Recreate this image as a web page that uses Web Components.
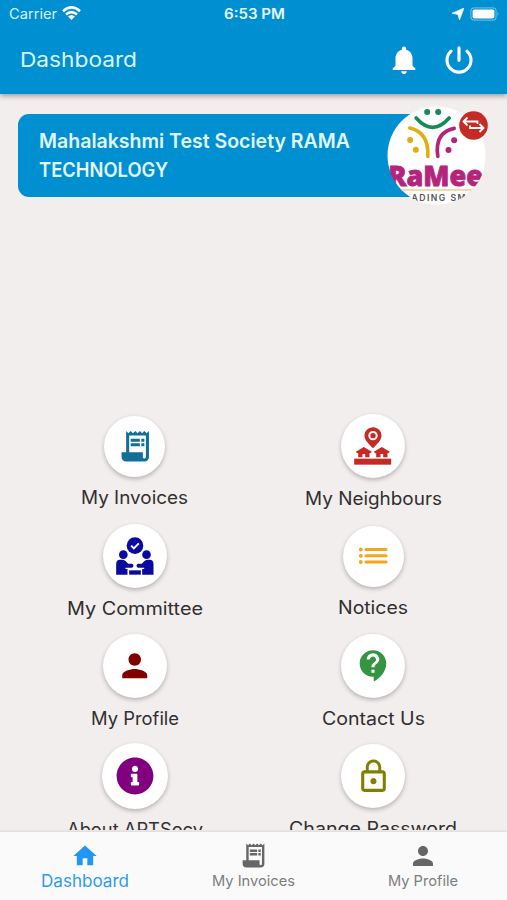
<!DOCTYPE html>
<html lang="en">
<head>
<meta charset="utf-8">
<title>Dashboard</title>
<style>
html,body{margin:0;height:100%}
body{width:507px;height:900px;overflow:hidden;background:#f2eeee;font-family:Inter,"Open Sans",sans-serif}
</style>
</head>
<body>
<society-app></society-app>
<script>
const P = {
  receipt: '<path d="M19.5 3.5L18 2l-1.5 1.5L15 2l-1.5 1.5L12 2l-1.5 1.5L9 2 7.5 3.5 6 2v14H3v3c0 1.66 1.34 3 3 3h12c1.66 0 3-1.34 3-3V2l-1.5 1.5zM19 19c0 .55-.45 1-1 1s-1-.45-1-1v-3H8V5h11v14zM9 7h6v2H9zM16 7h2v2h-2zM9 10h6v2H9zM16 10h2v2h-2z"/>',
  person: '<path d="M12 12c2.21 0 4-1.79 4-4s-1.79-4-4-4-4 1.79-4 4 1.79 4 4 4zm0 2c-2.67 0-8 1.34-8 4v2h16v-2c0-2.66-5.33-4-8-4z"/>',
  home: '<path d="M10 20v-6h4v6h5v-8h3L12 3 2 12h3v8z"/>',
  bell: '<path d="M12 22c1.1 0 2-.9 2-2h-4c0 1.1.89 2 2 2zm6-6v-5c0-3.07-1.64-5.64-4.5-6.32V4c0-.83-.67-1.5-1.5-1.5s-1.5.67-1.5 1.5v.68C7.63 5.36 6 7.92 6 11v5l-2 2v1h16v-1l-2-2z"/>',
  power: '<path d="M12 3.9V12.2M6.7 6.1A8 8 0 1 0 17.3 6.1" fill="none" stroke="currentColor" stroke-width="2.1" stroke-linecap="round"/>',
  contact: '<path d="M11.5 2C6.81 2 3 5.81 3 10.5S6.81 19 11.5 19h.5v3c4.86-2.34 8-7 8-11.5C20 5.81 16.19 2 11.5 2zm1 14.5h-2v-2h2v2zm0-3.500h-2c0-3.250 3-3 3-5 0-1.100-.9-2-2-2s-2 .9-2 2h-2c0-2.210 1.790-4 4-4s4 1.790 4 4c0 2.500-3 2.750-3 5z"/>',
  lock: '<path d="M12 17c1.100 0 2-.9 2-2s-.9-2-2-2-2 .9-2 2 .9 2 2 2zm6-9h-1V6c0-2.760-2.240-5-5-5S7 3.240 7 6v2H6c-1.100 0-2 .9-2 2v10c0 1.100.9 2 2 2h12c1.100 0 2-.9 2-2V10c0-1.100-.9-2-2-2zM8.900 6c0-1.710 1.390-3.100 3.100-3.100s3.100 1.390 3.100 3.100v2H8.900V6zM18 20H6V10h12v10z"/>'
};
const ICONS = {
  receipt: ['0 0 24 24', P.receipt], person: ['0 0 24 24', P.person], home: ['0 0 24 24', P.home],
  bell: ['0 0 24 24', P.bell], power: ['0 0 24 24', P.power], contact: ['0 0 24 24', P.contact], lock: ['0 0 24 24', P.lock],
  info: ['0 0 512 512', '<path d="M256 8C119.043 8 8 119.083 8 256c0 136.997 111.043 248 248 248s248-111.003 248-248C504 119.083 392.957 8 256 8zm0 110c23.196 0 42 18.804 42 42s-18.804 42-42 42-42-18.804-42-42 18.804-42 42-42zm56 254c0 6.627-5.373 12-12 12h-88c-6.627 0-12-5.373-12-12v-24c0-6.627 5.373-12 12-12h12v-64h-12c-6.627 0-12-5.373-12-12v-24c0-6.627 5.373-12 12-12h64c6.627 0 12 5.373 12 12v100h12c6.627 0 12 5.373 12 12v24z"/>'],
  list: ['153 28.5 192 192', '<path d="M228 105H288M228 124H288M228 142.500H288" stroke="currentColor" stroke-width="9" stroke-linecap="round"/><circle cx="212.500" cy="105" r="5.800"/><circle cx="212.500" cy="124" r="5.800"/><circle cx="212.500" cy="142.500" r="5.800"/>'],
  neighbours: ['153.5 28 192 192', '<path fill-rule="evenodd" d="M249.500 68C235 68 224 79 224 93C224 108 240 119 249.500 131C259 119 275 108 275 93C275 79 264 68 249.500 68ZM249.500 79a14 14 0 1 1 0 28a14 14 0 1 1 0-28Z"/><circle cx="249.500" cy="93" r="8"/><path d="M222 127L246 141L242 146L239 145V158H226V148H218V158H205V145L202 146L198 141Z"/><path d="M276 127L300 141L296 146L293 145V158H280V148H272V158H259V145L256 146L252 141Z"/><rect x="193" y="162" width="111" height="18"/>'],
  committee: ['128.5 28 192 192', '<circle cx="224.500" cy="93" r="25"/><path d="M213 93L221 101L236 86" fill="none" stroke="#fff" stroke-width="6"/><circle cx="189.500" cy="120" r="13"/><circle cx="259" cy="120" r="13"/><path d="M168 180V148Q168 135 180 135H187Q193 135 197 140L204 147H214Q220 147 220 153Q220 159 214 159H196V163H202V180Z"/><path d="M280 180V148Q280 135 268 135H262Q256 135 252 140L245 147H235Q229 147 229 153Q229 159 235 159H252V163H246V180Z"/><rect x="207" y="167" width="35" height="13"/>']
};

class AppIcon extends HTMLElement {
  connectedCallback() {
    const [vb, body] = ICONS[this.getAttribute('name')];
    const s = this.getAttribute('size');
    this.attachShadow({mode: 'open'}).innerHTML =
      `<style>:host{display:block;flex:none;width:${s}px;height:${s}px}svg{display:block;width:100%;height:100%;fill:currentColor}</style><svg viewBox="${vb}">${body}</svg>`;
  }
}

/* A single line whose glyphs are widened or narrowed to span the width given in "span". */
class FitText extends HTMLElement {
  connectedCallback() {
    const span = Number(this.getAttribute('span'));
    this.attachShadow({mode: 'open'}).innerHTML =
      `<style>:host{display:block;white-space:nowrap;width:${span}px}span{display:inline-block;transform-origin:0 50%}</style><span></span>`;
    const el = this.shadowRoot.querySelector('span');
    el.textContent = this.getAttribute('text');
    el.style.transform = `scaleX(${span / el.getBoundingClientRect().width})`;
  }
}

class StatusBar extends HTMLElement {
  connectedCallback() {
    this.attachShadow({mode: 'open'}).innerHTML = `
<style>
:host{display:grid;grid-template-columns:1fr auto 1fr;align-items:center;height:27px;padding:0 7px 0 8.500px;box-sizing:border-box;color:#fff}
.l,.r{display:flex;align-items:center}.l{font-size:14px;color:#d8f2fd;gap:5px}.r{justify-content:flex-end;gap:6px}
.t{font-size:14px;font-weight:600;color:#e6f8ff}svg{display:block}
</style>
<div class="l"><fit-text text="Carrier" span="48"></fit-text>
<svg width="19" height="15" viewBox="0 0 19 15" fill="none" stroke="#fff" stroke-width="2.500"><path d="M1 5.200Q9.500-2.400 18 5.200M4 8.500Q9.500 3.800 15 8.500"/><path d="M6 10.600Q9.500 7.600 13 10.600L9.500 14Z" fill="#fff" stroke="none"/></svg></div>
<fit-text class="t" text="6:53 PM" span="61"></fit-text>
<div class="r"><svg width="12" height="12" viewBox="0 0 12 12"><path d="M12 0L7.500 12L6 6.500L0 5.200Z" fill="#fff" stroke="#fff" stroke-width=".6"/></svg>
<svg width="30" height="14" viewBox="0 0 30 14"><rect x=".9" y=".8" width="25.200" height="12.400" rx="3.500" fill="none" stroke="#5fb8e2" stroke-width="1.200"/><rect x="2.600" y="2.500" width="21.800" height="9" rx="1.800" fill="#fff"/><path d="M27.500 4.800Q29.600 7 27.500 9.200Z" fill="#5fb8e2"/></svg></div>`;
  }
}

class AppHeader extends HTMLElement {
  connectedCallback() {
    this.attachShadow({mode: 'open'}).innerHTML = `
<style>
:host{display:block;flex:none;height:94px;background:#008fd0;box-shadow:0 2px 5px rgba(70,50,50,.45);position:relative;z-index:2}
.bar{display:flex;align-items:center;height:65px;padding:0 30px 0 20px;color:#fff}
.title{flex:1;font-size:20.600px;color:#d9f5ff}
.acts{display:flex;align-items:center;gap:20px}
</style>
<status-bar></status-bar>
<div class="bar"><div class="title"><fit-text text="Dashboard" span="117"></fit-text></div>
<div class="acts"><app-icon name="bell" size="34"></app-icon><app-icon name="power" size="36"></app-icon></div></div>`;
  }
}

class SocietyCard extends HTMLElement {
  connectedCallback() {
    this.attachShadow({mode: 'open'}).innerHTML = `
<style>
:host{display:block;position:relative;margin:19.500px 0 0 18px;width:472px;height:83px}
.card{box-sizing:border-box;width:420px;height:83px;border-radius:11px;background:#008fd0;padding:13px 0 0 21px;color:#e0f8ff;font-weight:600;font-size:20px;line-height:29px}
.logo{position:absolute;left:368.500px;top:-8px;width:99px;height:99px}
.swap{position:absolute;left:441px;top:-3px;width:29px;height:29px}
</style>
<div class="card"><fit-text text="Mahalakshmi Test Society RAMA" span="311"></fit-text><fit-text text="TECHNOLOGY" span="129"></fit-text></div>
<svg class="logo" viewBox="50.500 32 297 297">
<defs><clipPath id="c"><circle cx="199" cy="180.500" r="148"/></clipPath></defs>
<circle cx="199" cy="180.500" r="147" fill="#fff"/>
<g clip-path="url(#c)">
<g fill="none" stroke-width="11" stroke-linecap="round"><path d="M138 68Q187 124 237 68" stroke="#168a58"/><path d="M119 98Q177 112 173 183" stroke="#dfae12"/><path d="M252 99Q192 112 203 183" stroke="#b5247b"/></g>
<g fill="#168a58"><circle cx="171" cy="50" r="9"/><circle cx="204" cy="50" r="9"/></g>
<g fill="#dfae12"><circle cx="120" cy="134" r="9"/><circle cx="137" cy="163" r="9"/></g>
<g fill="#b5247b"><circle cx="252" cy="135" r="9"/><circle cx="235" cy="164" r="9"/></g>
<text x="54" y="272" font-family="Open Sans,sans-serif" font-weight="800" font-size="85" textLength="284" lengthAdjust="spacingAndGlyphs" fill="#b5247b" stroke="#b5247b" stroke-width="2.500">RaMee</text>
<path d="M75 284H325" stroke="#f0d080" stroke-width="4"/>
<text x="124" y="317" font-family="Inter,sans-serif" font-weight="600" font-size="26" textLength="162" fill="#555">ADING SM</text>
</g></svg>
<svg class="swap" viewBox="0 0 29 29" fill="none" stroke="#fff" stroke-width="1.800"><circle cx="14.500" cy="14.500" r="14.300" fill="#c62a24" stroke="none"/><path d="M8.500 6.500L4.500 10.500L8.500 14.500M4.500 10.500H18.500V13M20.500 13L24.500 17L20.500 21M24.500 17H11V14.500"/></svg>`;
  }
}

class MenuTile extends HTMLElement {
  connectedCallback() {
    const a = n => this.getAttribute(n);
    this.attachShadow({mode: 'open'}).innerHTML = `
<style>
:host{display:flex;flex-direction:column;align-items:center;height:110px;color:#303030;font-size:18px;line-height:24px}
.slot{height:66px;display:flex;align-items:center}
.disc{width:${a('disc')}px;height:${a('disc')}px;border-radius:50%;background:#fff;box-shadow:0 2px 4px rgba(60,50,50,.32);display:flex;align-items:center;justify-content:center;color:${a('tint')}}
fit-text{margin-top:${a('drop')}px}
</style>
<div class="slot"><div class="disc"><app-icon name="${a('icon')}" size="${a('size')}"></app-icon></div></div>
<fit-text text="${a('label')}" span="${a('span')}"></fit-text>`;
  }
}

class NavItem extends HTMLElement {
  connectedCallback() {
    const a = n => this.getAttribute(n), on = this.hasAttribute('active');
    this.attachShadow({mode: 'open'}).innerHTML = `
<style>
:host{display:flex;flex-direction:column;align-items:center;flex:1;padding-top:9px;color:${on ? '#2196f3' : '#666'}}
.i{height:30px;display:flex;align-items:center}
fit-text{font-size:${on ? 17 : 14.5}px;line-height:20px;color:${on ? '#2b9af3' : '#7d7d7d'}}
</style>
<div class="i"><app-icon name="${a('icon')}" size="${a('size')}"></app-icon></div>
<fit-text text="${a('label')}" span="${a('span')}"></fit-text>`;
  }
}

class SocietyApp extends HTMLElement {
  connectedCallback() {
    this.attachShadow({mode: 'open'}).innerHTML = `
<style>
:host{display:flex;flex-direction:column;height:900px;width:507px;background:#f2eeee}
main{flex:1;min-height:0;overflow:hidden}
.grid{display:grid;grid-template-columns:238.500px 238.500px;margin:216.500px 0 0 15.500px}
nav{flex:none;height:68.500px;display:flex;background:#fafafa;box-shadow:0 -1px 2px rgba(80,60,60,.12);margin-top:2px}
</style>
<app-header></app-header>
<main><society-card></society-card>
<div class="grid">
<menu-tile label="My Invoices" span="107" disc="61" icon="receipt" size="36.500" tint="#126f98" drop="6.500"></menu-tile>
<menu-tile label="My Neighbours" span="137" disc="64" icon="neighbours" size="64" tint="#c62a24" drop="7.500"></menu-tile>
<menu-tile label="My Committee" span="136" disc="64" icon="committee" size="64" tint="#0a0aa0" drop="7.500"></menu-tile>
<menu-tile label="Notices" span="70" disc="61" icon="list" size="64" tint="#f5a41c" drop="6.500"></menu-tile>
<menu-tile label="My Profile" span="88" disc="64" icon="person" size="37.500" tint="#800000" drop="7.500"></menu-tile>
<menu-tile label="Contact Us" span="103" disc="64" icon="contact" size="37.500" tint="#349440" drop="7.500"></menu-tile>
<menu-tile label="About APTSocy" span="136" disc="66" icon="info" size="38" tint="#800080" drop="8.500"></menu-tile>
<menu-tile label="Change Password" span="168" disc="64" icon="lock" size="37" tint="#808000" drop="7.500"></menu-tile>
</div></main>
<nav>
<nav-item active icon="home" size="28" label="Dashboard" span="88"></nav-item>
<nav-item icon="receipt" size="29" label="My Invoices" span="83"></nav-item>
<nav-item icon="person" size="30" label="My Profile" span="70"></nav-item>
</nav>`;
  }
}
customElements.define('app-icon', AppIcon);
customElements.define('fit-text', FitText);
customElements.define('status-bar', StatusBar);
customElements.define('app-header', AppHeader);
customElements.define('society-card', SocietyCard);
customElements.define('menu-tile', MenuTile);
customElements.define('nav-item', NavItem);
customElements.define('society-app', SocietyApp);
</script>
</body>
</html>
